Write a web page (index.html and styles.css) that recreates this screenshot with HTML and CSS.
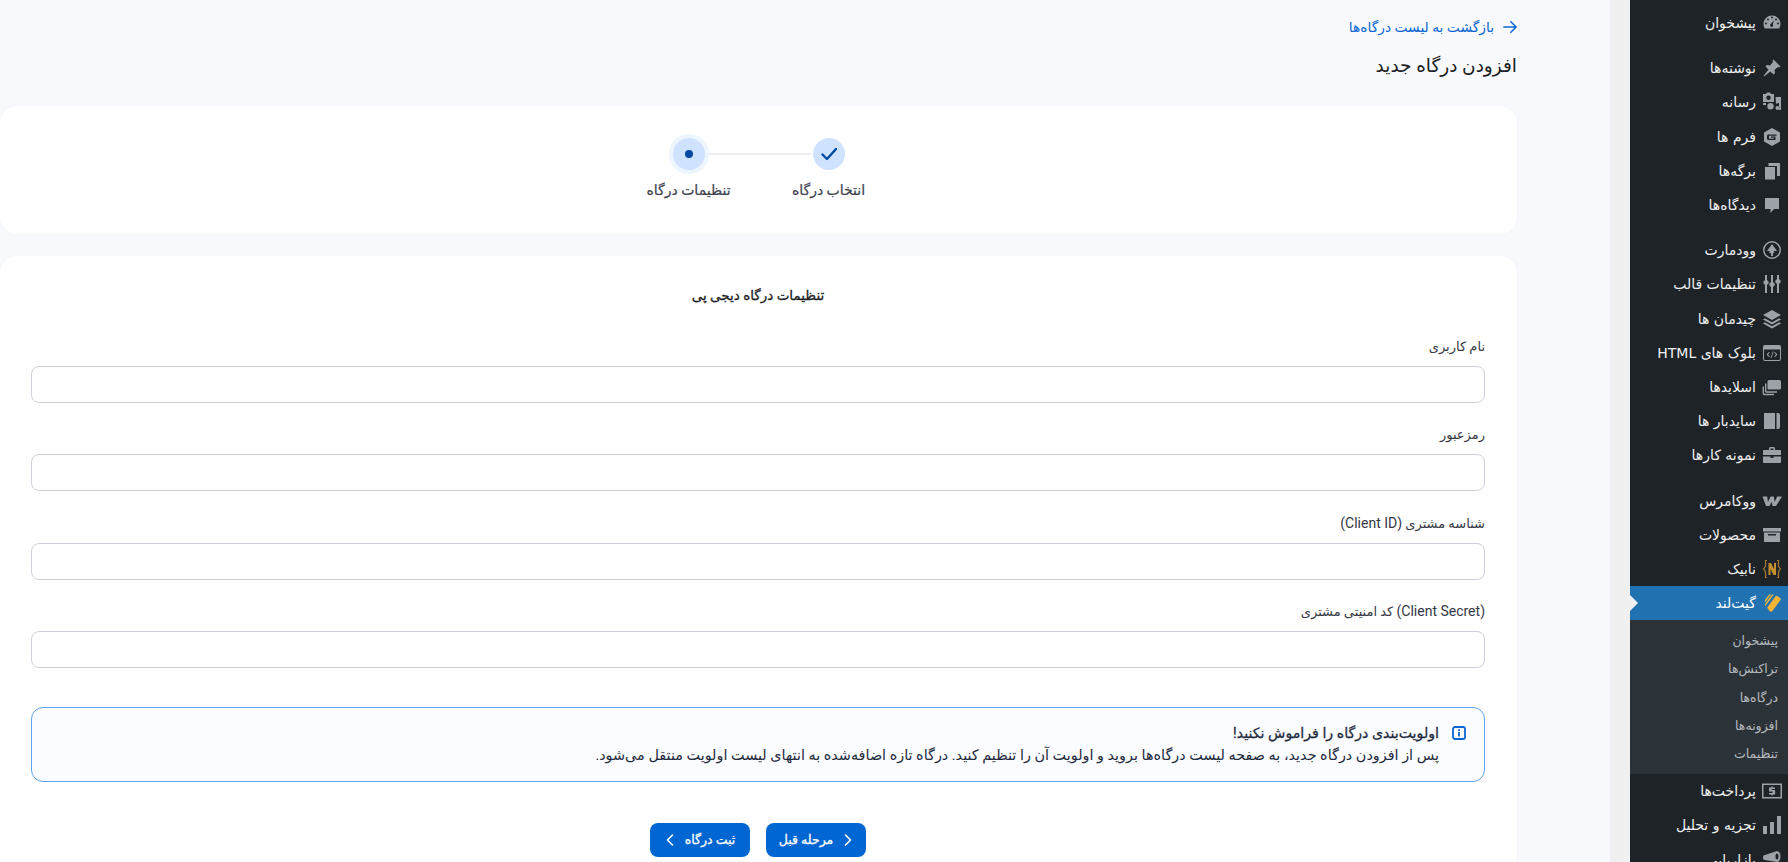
FILE: index.html
```html
<!DOCTYPE html>
<html lang="fa" dir="rtl">
<head>
<meta charset="utf-8">
<title>افزودن درگاه جدید</title>
<link rel="stylesheet" href="styles.css">
</head>
<body>
<div class="shell">
<nav class="adminmenu">
  <a class="mi first"><svg class="ic" viewBox="0 0 20 20"><path fill-rule="evenodd" d="M10 2.500a8.500 8.500 0 0 0-8.500 8.500c0 1.700.5 3.300 1.300 4.500h14.400A8.400 8.400 0 0 0 18.500 11 8.500 8.500 0 0 0 10 2.500zM4 11.500a1 1 0 1 1 0-2 1 1 0 0 1 0 2zm2-4a1 1 0 1 1 0-2 1 1 0 0 1 0 2zM10 5.500a1 1 0 1 1 0-2 1 1 0 0 1 0 2zm4 2a1 1 0 1 1 0-2 1 1 0 0 1 0 2zm2 4a1 1 0 1 1 0-2 1 1 0 0 1 0 2zM10 14a1.800 1.800 0 0 1-1-3.300L12 7l-1.200 4.400A1.800 1.800 0 0 1 10 14z"/></svg><span>پیشخوان</span></a>
  <a class="mi sep"><svg class="ic" viewBox="0 0 20 20"><path d="M11.500 1.500l7 7-1.500 1-1-.5-3.500 3 .5 3-1.500 1.500-3-3L2 18.500l-.5-.5 5-6.500-3-3L5 7l3 .5 3-3.500-.5-1z"/></svg><span>نوشته‌ها</span></a>
  <a class="mi"><svg class="ic" viewBox="0 0 20 20"><path fill-rule="evenodd" d="M1 2h3l1-1.500h3L9 2h3v8H1zm5.500 1.500a2.200 2.200 0 1 0 0 4.400 2.200 2.200 0 0 0 0-4.400zM13.500 5H19v13h-2v-7l-3 .7zM8.500 11a3.200 3.200 0 1 1 0 6.400 3.200 3.200 0 0 1 0-6.400zM15.500 14a2 2 0 1 1-.1 4 2 2 0 0 1 .1-4zM1 11h3v2H1z"/></svg><span>رسانه</span></a>
  <a class="mi"><svg class="ic" viewBox="0 0 20 20"><path fill-rule="evenodd" d="M10 1l8 4.500v9L10 19l-8-4.500v-9zM6.500 7.500c-1 0-1.500.7-1.500 1.500v2.500c0 .8.6 1.500 1.500 1.500h7v-3.500H9v1.300h3v1H7v-3h7.500V7.500z"/></svg><span>فرم ها</span></a>
  <a class="mi"><svg class="ic" viewBox="0 0 20 20"><path d="M6.500 2H18v13h-3V5H6.500z"/><path d="M3 6h10v12.500H3z"/></svg><span>برگه‌ها</span></a>
  <a class="mi"><svg class="ic" viewBox="0 0 20 20"><path d="M3 3h14v11h-5l-3.500 4v-4H3z"/></svg><span>دیدگاه‌ها</span></a>
  <a class="mi sep2"><svg class="ic" viewBox="0 0 20 20"><path fill-rule="evenodd" d="M10 1a9 9 0 1 1 0 18 9 9 0 0 1 0-18zm0 1.500a7.500 7.500 0 1 0 0 15 7.500 7.500 0 0 0 0-15zM10 4l5 7h-3.500l1 2H11v3H9v-3H7l1-2H5z"/></svg><span>وودمارت</span></a>
  <a class="mi"><svg class="ic" viewBox="0 0 20 20"><path d="M3 1h2v5.200a2.400 2.400 0 0 1 0 4.600V19H3v-8.200a2.400 2.400 0 0 1 0-4.600zM9 1h2v7.200a2.400 2.400 0 0 1 0 4.600V19H9v-6.200a2.400 2.400 0 0 1 0-4.600zM15 1h2v4.200a2.400 2.400 0 0 1 0 4.600V19h-2V9.800a2.400 2.400 0 0 1 0-4.600z"/></svg><span>تنظیمات قالب</span></a>
  <a class="mi"><svg class="ic" viewBox="0 0 20 20"><path d="M10 1l9 5-9 5-9-5z"/><path d="M2.800 9.200L10 13.200l7.200-4L19 10.500l-9 5-9-5z"/><path d="M2.800 13.200L10 17.200l7.200-4L19 14.500 10 19.500l-9-5z"/></svg><span>چیدمان ها</span></a>
  <a class="mi"><svg class="ic" viewBox="0 0 20 20"><path fill-rule="evenodd" d="M3 2h14a2 2 0 0 1 2 2v12a2 2 0 0 1-2 2H3a2 2 0 0 1-2-2V4a2 2 0 0 1 2-2zM2 6.500V16a1 1 0 0 0 1 1h14a1 1 0 0 0 1-1V6.500zM7 9l-2.500 2.500L7 14l.8-.6-1.800-1.900L7.800 9.600zm6 0l-.8.6 1.800 1.900-1.800 1.900.8.600 2.500-2.500zM10.800 8.500l-2.300 6.500h.9l2.300-6.500z"/></svg><span>بلوک های HTML</span></a>
  <a class="mi"><svg class="ic" viewBox="0 0 20 20"><path d="M7 3h10.500a1.500 1.500 0 0 1 1.500 1.500V11a1.500 1.500 0 0 1-1.500 1.500H7A1.500 1.500 0 0 1 5.500 11V4.500A1.500 1.500 0 0 1 7 3z"/><path fill="none" stroke="currentColor" stroke-width="1.400" d="M3.700 6.500V14a1 1 0 0 0 1 1H15M1.300 9.500V16.500a1 1 0 0 0 1 1H12"/></svg><span>اسلایدها</span></a>
  <a class="mi"><svg class="ic" viewBox="0 0 20 20"><path d="M2 2h11v16H2zM14.500 2H16a2 2 0 0 1 2 2v12a2 2 0 0 1-2 2h-1.500z"/></svg><span>سایدبار ها</span></a>
  <a class="mi"><svg class="ic" viewBox="0 0 20 20"><path fill-rule="evenodd" d="M7 3.500C7 2.700 7.700 2 8.500 2h3c.8 0 1.500.7 1.500 1.500V5h5c.6 0 1 .4 1 1v4H1V6c0-.6.4-1 1-1h5zM8.500 3.500V5h3V3.500zM1 11.500h7.500V13h3v-1.500H19V17c0 .6-.4 1-1 1H2c-.6 0-1-.4-1-1z"/></svg><span>نمونه کارها</span></a>
  <a class="mi sep3"><svg class="ic" viewBox="0 0 20 20"><path d="M.5 5.500h4.700l.7 5.500 2.700-5.500h3.200l.8 5.500 2.600-5.500h4.800L14 15h-3.500l-.8-4.300L7.500 15H4z"/></svg><span>ووکامرس</span></a>
  <a class="mi"><svg class="ic" viewBox="0 0 20 20"><path fill-rule="evenodd" d="M1 3h18v3.500H1zM2 7.500h16V17H2zM6 9v1.500h8V9z"/></svg><span>محصولات</span></a>
  <a class="mi"><svg class="ic nabik" viewBox="0 0 20 20"><path fill="none" stroke="#a97a28" stroke-width="1.200" d="M5 1.500H3.500v6L1.500 10l2 2.500v6H5M15 1.500h1.500v6l2 2.500-2 2.500v6H15"/><path fill="#c48f2c" d="M6.500 4H9l3 6V4h2v12h-2.500l-3-6v6h-2z"/></svg><span>نابیک</span></a>
  <a class="mi current"><svg class="ic" viewBox="0 0 20 20"><g fill="#f5b335"><path d="M3 11L10 1.500h1.800L3 13.500zM3 7l4-5.500h2L3 9.500zM7 17.500l-1.800-2.700L13.300 3.500a1.500 1.500 0 0 1 2-.4l2.800 2a1.500 1.500 0 0 1 .3 2l-8 11a1.500 1.500 0 0 1-2 .4z"/></g></svg><span>گیت‌لند</span></a>
  <div class="submenu">
    <a>پیشخوان</a><a>تراکنش‌ها</a><a>درگاه‌ها</a><a>افزونه‌ها</a><a>تنظیمات</a>
  </div>
  <a class="mi"><svg class="ic wide" viewBox="0 0 20 20"><path fill-rule="evenodd" d="M0 2.500h20v15H0zM1.500 4v12h17V4zM9.300 5.500h1.400v1H13V8h-3.500v1h3.600v4.500h-2.400v1H9.300v-1H7V12h3.500v-1.500H7V6.500h2.300z"/></svg><span>پرداخت‌ها</span></a>
  <a class="mi"><svg class="ic" viewBox="0 0 20 20"><path d="M1 11h4v8H1zM8 7h4v12H8zM15 1h4v18h-4z"/></svg><span>تجزیه و تحلیل</span></a>
  <a class="mi"><svg class="ic" viewBox="0 0 20 20"><path fill-rule="evenodd" d="M15 1a3.500 5.500 0 0 1 0 11L3 10a2 2 0 0 1-2-2V7a2 2 0 0 1 2-2zM15 3.500a1.500 3 0 1 0 0 6 1.500 3 0 0 0 0-6z"/></svg><span>بازاریابی</span></a>
</nav>
<div class="gutter"></div>
<main class="app">
  <a class="back"><svg class="back-ic" viewBox="0 0 16 16"><path fill="none" stroke="currentColor" stroke-width="1.800" stroke-linecap="round" stroke-linejoin="round" d="M1 8h14M9 2L15 8 9 14"/></svg><span>بازگشت به لیست درگاه‌ها</span></a>
  <h1 class="title">افزودن درگاه جدید</h1>
  <section class="card stepper">
    <div class="steps">
      <div class="step">
        <div class="node done"><svg viewBox="0 0 16 16"><path fill="none" stroke="currentColor" stroke-width="2.400" stroke-linecap="round" stroke-linejoin="round" d="M1.500 8.500L6 13 15 3"/></svg></div>
        <div class="step-label">انتخاب درگاه</div>
      </div>
      <div class="connector"></div>
      <div class="step">
        <div class="node active"><i></i></div>
        <div class="step-label">تنظیمات درگاه</div>
      </div>
    </div>
  </section>
  <section class="card form">
    <h2 class="form-title">تنظیمات درگاه دیجی پی</h2>
    <div class="field f1"><label>نام کاربری</label><input type="text"></div>
    <div class="field"><label>رمزعبور</label><input type="text"></div>
    <div class="field"><label>شناسه مشتری <span class="lat">(Client ID)</span></label><input type="text"></div>
    <div class="field"><label><span class="lat">(Client Secret)</span> کد امنیتی مشتری</label><input type="text"></div>
    <div class="alert">
      <svg class="alert-ic" viewBox="0 0 14 14"><rect x="1" y="1" width="12" height="12" rx="2" fill="none" stroke="currentColor" stroke-width="1.800"/><path fill="currentColor" d="M6.100 6h1.800v4.500H6.100zM6.100 3.300h1.800v1.700H6.100z"/></svg>
      <div class="alert-body">
        <div class="alert-title">اولویت‌بندی درگاه را فراموش نکنید!</div>
        <div class="alert-text">پس از افزودن درگاه جدید، به صفحه لیست درگاه‌ها بروید و اولویت آن را تنظیم کنید. درگاه تازه اضافه‌شده به انتهای لیست اولویت منتقل می‌شود.</div>
      </div>
    </div>
    <div class="actions">
      <button class="btn"><svg viewBox="0 0 10 16"><path fill="none" stroke="currentColor" stroke-width="1.600" stroke-linecap="round" stroke-linejoin="round" d="M2.500 3l5 5-5 5"/></svg><span>مرحله قبل</span></button>
      <button class="btn"><span>ثبت درگاه</span><svg viewBox="0 0 10 16"><path fill="none" stroke="currentColor" stroke-width="1.600" stroke-linecap="round" stroke-linejoin="round" d="M7.500 3l-5 5 5 5"/></svg></button>
    </div>
  </section>
</main>
</div>
</body>
</html>
```

FILE: styles.css
```css
* { box-sizing: border-box; }
html, body { margin: 0; height: 862px; overflow: hidden; }
body { font-family: Roboto, "DejaVu Sans", sans-serif; background: #f8f9fc; color: #1d2327; }
.shell { display: flex; height: 862px; }

.adminmenu { width: 158px; flex: none; background: #1d2327; padding-top: 6px; overflow: hidden; font-family: "DejaVu Sans", sans-serif; }
.mi { display: flex; align-items: center; height: 34.2px; color: #f0f0f1; font-size: 14px; position: relative; white-space: nowrap; }
.mi .ic { width: 20px; height: 20px; margin: 0 6px; fill: #9ca2a7; color: #9ca2a7; flex: none; }
.mi .ic.wide { width: 20px; height: 20px; }
.mi .ic.nabik { width: 20px; height: 24px; }
.mi.first { margin-bottom: 11px; }
.mi.sep2 { margin-top: 11px; }
.mi.sep3 { margin-top: 11px; }
.mi.current { background: #2271b1; color: #fff; }
.mi.current::before { content: ""; position: absolute; left: 0; top: 50%; margin-top: -8px; border-style: solid; border-width: 8px 0 8px 8px; border-color: transparent transparent transparent #f0f0f1; }
.submenu { background: #2c3338; padding: 6px 0 6px; }
.submenu a { display: flex; align-items: center; height: 28.400px; padding-right: 10px; font-size: 12.500px; color: #b6babf; }

.gutter { width: 20px; flex: none; background: #f0f0f1; }

.app { width: 1610px; flex: none; padding-right: 93px; }
.back { display: flex; align-items: center; gap: 9px; height: 18px; margin-top: 18px; color: #0b66d0; font-size: 13.800px; font-weight: 500; }
.back-ic { width: 14px; height: 14px; flex: none; }
.title { margin: 18px 0 0; font-size: 18.500px; line-height: 24px; font-weight: 500; color: #1c1e24; }

.card { background: #fff; border-radius: 16px; box-shadow: 0 0 1px #e4e6ec; }
.stepper { height: 128px; margin-top: 28px; padding-top: 32px; }
.steps { display: flex; justify-content: center; align-items: flex-start; }
.step { width: 140px; display: flex; flex-direction: column; align-items: center; position: relative; }
.node { width: 32px; height: 32px; border-radius: 50%; background: #cfe2ff; color: #004aa3; display: flex; align-items: center; justify-content: center; }
.node svg { width: 16px; height: 16px; }
.node.active { box-shadow: 0 0 0 4px #edf5ff; }
.node i { width: 8px; height: 8px; border-radius: 50%; background: #004aa3; }
.step-label { margin-top: 11px; font-size: 14px; line-height: 18px; color: #40434f; white-space: nowrap; -webkit-text-stroke: .2px #40434f; }
.connector { width: 104px; height: 2px; background: #eceef3; margin: 15px -52px 0; flex: none; }

.form { height: 640px; margin-top: 22px; padding: 31px 32px 0 31px; }
.form-title { margin: 0; text-align: center; font-size: 13.500px; line-height: 16px; font-weight: 400; color: #1c1e24; -webkit-text-stroke: .3px #1c1e24; }
.field { margin-top: 23.300px; }
.field.f1 { margin-top: 35px; }
.field label { display: block; height: 18px; font-size: 13px; line-height: 18px; color: #353844; margin-bottom: 10px; }
.lat { font-size: 14px; line-height: 1; }
.field input { display: block; width: 100%; height: 37px; border: 1px solid #ced1da; border-radius: 8px; background: #fff; }

.alert { display: flex; gap: 13px; height: 75px; margin-top: 39px; padding: 16px 18px 0; border: 1px solid #5ba4f0; border-radius: 12px; background: #fafcff; }
.alert-ic { width: 14px; height: 14px; color: #0a66d0; flex: none; margin-top: 2px; }
.alert-title { font-size: 14.200px; line-height: 18px; color: #1f2a3c; -webkit-text-stroke: .3px #1f2a3c; }
.alert-text { font-size: 14.400px; line-height: 22px; color: #1f2a3c; margin-top: 3px; }

.actions { display: flex; justify-content: center; gap: 16px; margin-top: 41px; }
.btn { display: flex; align-items: center; justify-content: center; gap: 10px; width: 100px; height: 34px; border: 0; border-radius: 8px; background: #0066d1; color: #fff; font: inherit; font-size: 12.500px; padding: 0; -webkit-text-stroke: .3px #fff; }
.btn svg { width: 10px; height: 16px; flex: none; }
```
